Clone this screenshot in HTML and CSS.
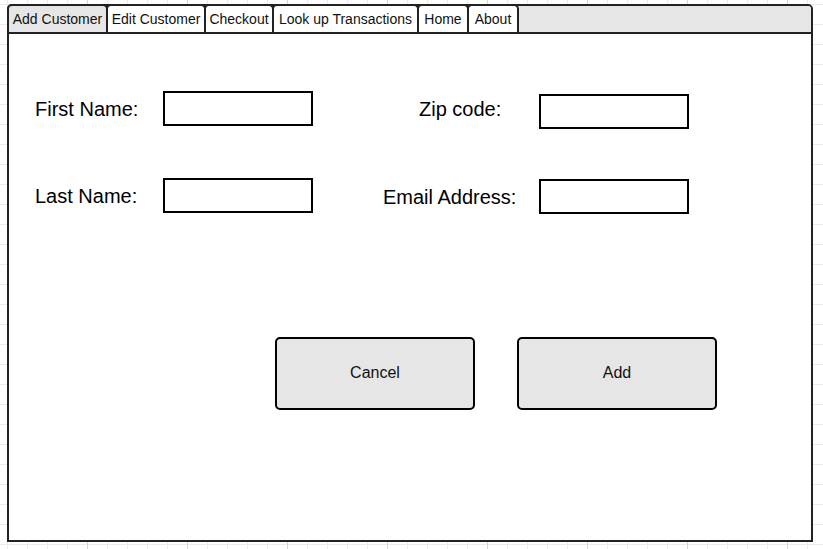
FILE: index.html
```html
<!DOCTYPE html>
<html lang="en">
<head>
<meta charset="utf-8">
<title>Add Customer</title>
<link rel="stylesheet" href="styles.css">
</head>
<body>
<div class="frame">
  <div class="tabbar">
    <div class="tab tab-active tab-add">Add Customer</div>
    <div class="tab tab-edit">Edit Customer</div>
    <div class="tab tab-checkout">Checkout</div>
    <div class="tab tab-lookup">Look up Transactions</div>
    <div class="tab tab-home">Home</div>
    <div class="tab tab-about">About</div>
  </div>
  <div class="content">
    <div class="form">
      <div class="col col-left">
        <div class="field">
          <span class="label label-left">First Name:</span>
          <input class="input" type="text">
        </div>
        <div class="field">
          <span class="label label-left">Last Name:</span>
          <input class="input" type="text">
        </div>
      </div>
      <div class="col col-right">
        <div class="field">
          <span class="label label-right label-zip">Zip code:</span>
          <input class="input" type="text">
        </div>
        <div class="field">
          <span class="label label-right">Email Address:</span>
          <input class="input" type="text">
        </div>
      </div>
    </div>
    <div class="actions">
      <button class="btn" type="button">Cancel</button>
      <button class="btn" type="button">Add</button>
    </div>
  </div>
</div>
</body>
</html>
```

FILE: styles.css
```css
html, body {
  margin: 0;
}
body {
  width: 823px;
  height: 549px;
  box-sizing: border-box;
  padding: 4px 0 0 7px;
  overflow: hidden;
  font-family: "Liberation Sans", Arial, sans-serif;
  color: #000;
  background-color: #fff;
  background-image:
    linear-gradient(to right, #d6d6d6 1px, transparent 1px),
    linear-gradient(to right, #ebebeb 1px, transparent 1px),
    linear-gradient(to bottom, #ebebeb 1px, transparent 1px);
  background-size: 100px 100%, 20px 100%, 100% 20px;
  background-position: 87px 0, 7px 0, 0 4px;
}

.frame {
  width: 806px;
  height: 538px;
  box-sizing: border-box;
  border: 2px solid #222;
  border-radius: 5px 5px 0 0;
  background: #fff;
  display: flex;
  flex-direction: column;
}

.tabbar {
  display: flex;
  height: 28px;
  box-sizing: border-box;
  background: #e6e6e6;
  border-bottom: 2px solid #222;
  border-radius: 3px 3px 0 0;
  flex-shrink: 0;
}

.tab {
  margin-top: -2px;
  margin-left: -2px;
  height: 28px;
  box-sizing: border-box;
  border: 2px solid #222;
  border-bottom: none;
  border-radius: 5px 5px 0 0;
  background: #fff;
  display: flex;
  align-items: center;
  justify-content: center;
  font-size: 14px;
  color: #111;
  white-space: nowrap;
  flex-shrink: 0;
}
.tab-active { background: #e6e6e6; }
.tab-add { width: 101px; }
.tab-edit { width: 100px; }
.tab-checkout { width: 70px; }
.tab-lookup { width: 147px; }
.tab-home { width: 52px; }
.tab-about { width: 52px; }

.content {
  flex: 1;
  padding: 57px 0 0 26px;
}

.form {
  display: flex;
  align-items: flex-start;
  gap: 70px;
}

.col {
  display: flex;
  flex-direction: column;
}
.col-left { gap: 52px; }
.col-right { gap: 50px; margin-top: 3px; }

.field {
  display: flex;
  align-items: center;
}

.label {
  font-size: 20px;
  color: #000;
  white-space: nowrap;
  box-sizing: border-box;
  padding-top: 1px;
}
.label-left { width: 128px; }
.label-right { width: 156px; }
.label-zip { padding-left: 36px; padding-top: 0; padding-bottom: 5px; }

.input {
  width: 150px;
  height: 35px;
  box-sizing: border-box;
  margin: 0;
  padding: 0;
  border: 2px solid #000;
  border-radius: 0;
  background: #fff;
  outline: none;
}

.actions {
  display: flex;
  gap: 42px;
  margin-top: 123px;
  padding-left: 240px;
}

.btn {
  width: 200px;
  height: 73px;
  box-sizing: border-box;
  margin: 0;
  padding: 0 0 2px 0;
  border: 2px solid #000;
  border-radius: 5px;
  background: #e6e6e6;
  font-family: "Liberation Sans", Arial, sans-serif;
  font-size: 16px;
  color: #111;
}
```
